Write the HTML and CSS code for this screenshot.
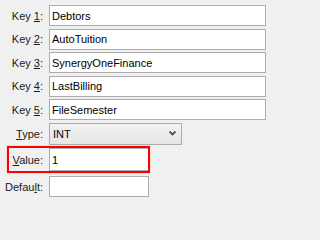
FILE: index.html
```html
<!DOCTYPE html>
<html>
<head>
<meta charset="utf-8">
<link rel="stylesheet" href="styles.css">
</head>
<body>
<div class="page">
  <form class="form">
    <label class="lbl">Key <u>1</u>:</label>
    <input class="field" type="text" value="Debtors">
    <label class="lbl">Key <u>2</u>:</label>
    <input class="field" type="text" value="AutoTuition">
    <label class="lbl">Key <u>3</u>:</label>
    <input class="field" type="text" value="SynergyOneFinance">
    <label class="lbl">Key <u>4</u>:</label>
    <input class="field" type="text" value="LastBilling">
    <label class="lbl">Key <u>5</u>:</label>
    <input class="field" type="text" value="FileSemester">
    <label class="lbl"><u>T</u>ype:</label>
    <div class="select">
      <span>INT</span>
      <svg class="chev" width="7" height="5" viewBox="0 0 7 5"><path d="M0.5 0.5 L3.5 3.5 L6.5 0.5" fill="none" stroke="#4d4d4d" stroke-width="1.8"/></svg>
    </div>
    <label class="lbl lbl-value"><u>V</u>alue:</label>
    <input class="field short tall" type="text" value="1">
    <label class="lbl lbl-default">Defau<u>l</u>t:</label>
    <input class="field short last" type="text" value="">
  </form>
  <div class="highlight"></div>
</div>
</body>
</html>
```
FILE: styles.css
```css
html, body {
  margin: 0;
  background: #f0f0f0;
}
.page {
  position: relative;
  width: 271px;
  height: 202px;
  overflow: hidden;
}
.form {
  display: grid;
  grid-template-columns: 44px 217px;
  column-gap: 5px;
  row-gap: 2.5px;
  padding-top: 5px;
  align-items: center;
  font-family: "Liberation Sans", Arial, sans-serif;
  font-size: 11px;
  color: #1a1a1a;
}
.lbl {
  text-align: right;
  padding-right: 1px;
  white-space: nowrap;
}
.lbl u {
  text-decoration-thickness: 1px;
  text-underline-offset: 1px;
}
.field {
  box-sizing: border-box;
  height: 21px;
  margin: 0;
  border: 1px solid #adadad;
  background: #fff;
  padding: 0 0 0 2px;
  font-family: "Liberation Sans", Arial, sans-serif;
  font-size: 11px;
  color: #000;
  outline: none;
}
.field.short {
  width: 100px;
}
.field.tall {
  height: 23px;
  margin-top: 1px;
}
.lbl-value {
  margin-top: 1px;
}
.field.last,
.lbl-default {
  margin-top: 2.5px;
}
.select {
  box-sizing: border-box;
  width: 133px;
  height: 22px;
  border: 1px solid #acacac;
  background: linear-gradient(#f2f2f2, #e6e6e6);
  display: flex;
  align-items: center;
  justify-content: space-between;
  padding: 0 5px 0 3px;
  color: #000;
}
.chev {
  display: block;
}
.highlight {
  position: absolute;
  left: 7px;
  top: 146px;
  width: 139px;
  height: 23px;
  border: 2px solid #ff0000;
  box-shadow: 0 0 1px rgba(255, 0, 0, 0.5);
}
```
